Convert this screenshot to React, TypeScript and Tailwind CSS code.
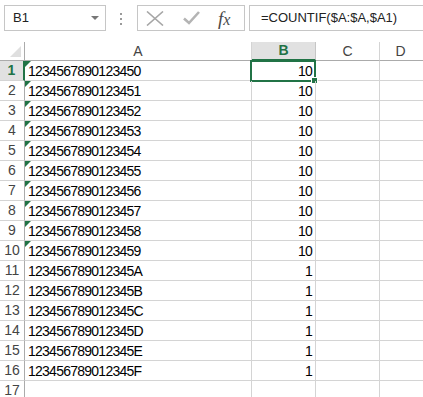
import React from 'react';

const GREEN = '#217346';

const rows = [
  ...'0123456789'.split('').map((d) => ({ a: '123456789012345' + d, b: '10', flag: true })),
  ...'ABCDEF'.split('').map((d) => ({ a: '123456789012345' + d, b: '1', flag: false })),
  { a: '', b: '', flag: false },
];

const App = () => {
  return (
    <div className="w-[423px] h-[397px] overflow-hidden bg-white font-['Liberation_Sans',Arial,sans-serif] text-black">
      {/* Formula bar */}
      <div className="flex h-[42px] items-start pt-[5px] pl-[4px]">
        <div className="flex h-[26px] w-[102px] shrink-0 items-center justify-between border border-[#c6c6c6] pl-[8px] pr-[6px] text-[13px] text-[#222]">
          <span>B1</span>
          <svg width="8" height="5" viewBox="0 0 8 5">
            <path d="M0 0 H8 L4 4 Z" fill="#777" />
          </svg>
        </div>
        <div className="ml-[14px] mr-[15px] flex shrink-0 flex-col gap-[3px] pt-[8px]">
          <div className="h-[2px] w-[2px] bg-[#9a9a9a]" />
          <div className="h-[2px] w-[2px] bg-[#9a9a9a]" />
          <div className="h-[2px] w-[2px] bg-[#9a9a9a]" />
        </div>
        <div className="flex h-[26px] w-[108px] shrink-0 items-center border border-[#c6c6c6]">
          <svg className="ml-[8px]" width="18" height="15" viewBox="0 0 18 15">
            <path d="M1 0.5 L17 14.5 M17 0.5 L1 14.5" stroke="#a6a6a6" strokeWidth="1.6" fill="none" />
          </svg>
          <svg className="ml-[19px]" width="17" height="14" viewBox="0 0 17 14">
            <path d="M1 7.5 L6 12 L16 1" stroke="#b4b4b4" strokeWidth="2.6" fill="none" />
          </svg>
          <span className="ml-[18px] font-['Liberation_Serif',serif] text-[19px] italic leading-none text-[#4a4a4a]">
            f<span className="text-[16px]">x</span>
          </span>
        </div>
        <div className="ml-[4px] flex h-[26px] flex-1 items-center border border-r-0 border-[#c6c6c6] pl-[11px] text-[13px] text-[#222]">
          =COUNTIF($A:$A,$A1)
        </div>
      </div>

      {/* Column headers */}
      <div className="grid grid-cols-[25px_227px_64px_64px_1fr] text-[14px] text-[#444]">
        <div className="relative h-[19px] border-r border-b border-[#ababab]">
          <div className="absolute right-[3px] bottom-[3px] h-0 w-0 border-b-[11px] border-l-[11px] border-b-[#dfdfdf] border-l-transparent" />
        </div>
        <div className="flex h-[19px] items-center justify-center border-r border-b border-r-[#d4d4d4] border-b-[#ababab]">A</div>
        <div
          className="flex h-[19px] items-center justify-center border-r border-b-2 border-r-[#c6c6c6] bg-[#e1e1e1] font-bold"
          style={{ color: GREEN, borderBottomColor: GREEN }}
        >
          B
        </div>
        <div className="flex h-[19px] items-center justify-center border-r border-b border-r-[#d4d4d4] border-b-[#ababab]">C</div>
        <div className="flex h-[19px] items-center justify-center border-b border-b-[#ababab] pr-[2px]">D</div>

        {rows.map((r, i) => (
          <React.Fragment key={i}>
            {i === 0 ? (
              <div
                className="flex h-[20px] items-center justify-center border-r-2 border-b border-b-[#d4d4d4] bg-[#e1e1e1] font-bold"
                style={{ color: GREEN, borderRightColor: GREEN }}
              >
                {i + 1}
              </div>
            ) : (
              <div className="flex h-[20px] items-center justify-center border-r border-b border-r-[#ababab] border-b-[#d4d4d4]">
                {i + 1}
              </div>
            )}
            <div className="relative flex h-[20px] items-end border-r border-b border-[#d4d4d4] pl-[3px] leading-[18px] tracking-[-0.75px] text-black">
              {r.flag && (
                <div
                  className="absolute top-0 left-0 h-0 w-0 border-t-[6px] border-r-[6px] border-r-transparent"
                  style={{ borderTopColor: GREEN }}
                />
              )}
              {r.a}
            </div>
            <div className="relative flex h-[20px] items-end justify-end border-r border-b border-[#d4d4d4] pr-[3px] leading-[18px] tracking-[-0.75px] text-black">
              {i === 0 && (
                <div
                  className="absolute top-[-1px] left-[-2px] h-[22px] w-[66px] border-2"
                  style={{ borderColor: GREEN }}
                >
                  <div
                    className="absolute right-[-4px] bottom-[-4px] h-[7px] w-[7px] border border-white"
                    style={{ backgroundColor: GREEN }}
                  />
                </div>
              )}
              {r.b}
            </div>
            <div className="h-[20px] border-r border-b border-[#d4d4d4]" />
            <div className="h-[20px] border-b border-[#d4d4d4]" />
          </React.Fragment>
        ))}
      </div>
    </div>
  );
};

export default App;
